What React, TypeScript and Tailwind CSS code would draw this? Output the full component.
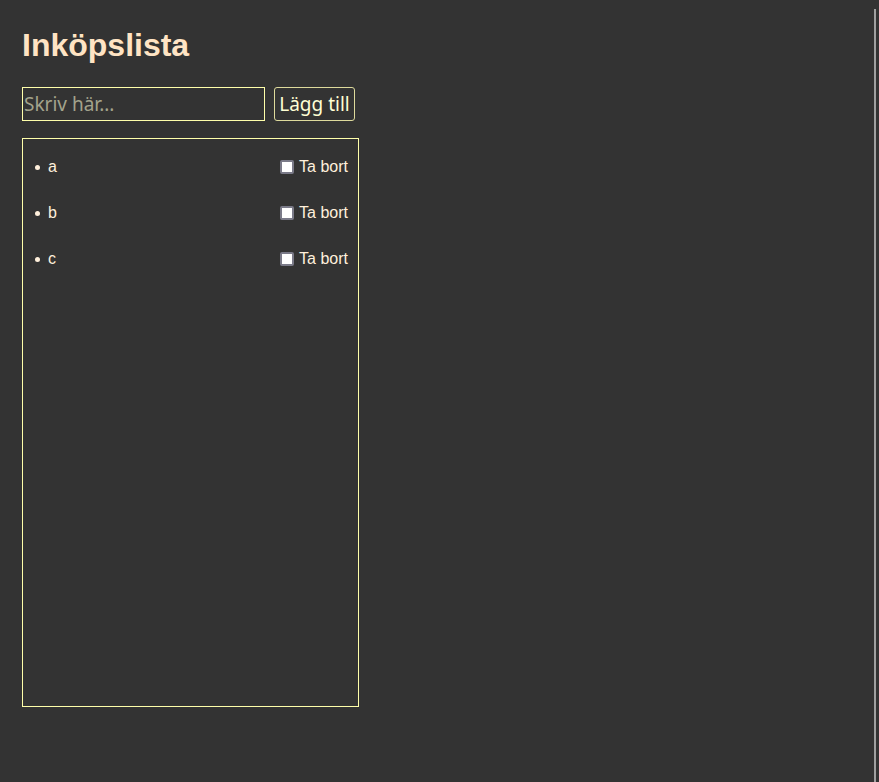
import React from "react";

const items = ["a", "b", "c"];

export default function App() {
  return (
    <div className="min-h-screen w-full bg-[#333333] flex" style={{ minHeight: 782 }}>
      <div className="flex-1 flex flex-col items-start pl-[22px] pt-[27px]">
        <h1 className="text-[32px] leading-[37px] font-bold text-[#ffe4c4] [font-family:'Liberation_Sans',Arial,sans-serif]">
          Inköpslista
        </h1>
        <div className="mt-[23px] flex items-center">
          <input
            type="text"
            placeholder="Skriv här..."
            className="w-[243px] h-[34px] border border-[#ffffaa] bg-transparent px-[1px] text-[19px] text-[#ffffd0] placeholder:text-[#a3a38c] outline-none [font-family:'Noto_Sans',sans-serif]"
          />
          <button className="ml-[9px] w-[81px] h-[34px] border border-[#deda9c] rounded-[3px] bg-transparent text-[19px] text-[#ffffd4] [font-family:'Noto_Sans',sans-serif] flex items-center justify-center">
            Lägg till
          </button>
        </div>
        <div className="mt-[17px] w-[337px] h-[569px] border border-[#ffffaa] pt-[5px] pl-[12px] pr-[10px] [font-family:'Liberation_Sans',Arial,sans-serif]">
          {items.map((it) => (
            <div key={it} className="h-[46px] flex items-center justify-between">
              <div className="flex items-center">
                <span className="w-[5px] h-[5px] rounded-full bg-[#fff0dc]" />
                <span className="ml-[8px] text-[16px] leading-[18px] text-[#fff0dc]">{it}</span>
              </div>
              <label className="flex items-center text-[16px] leading-[18px] text-[#fff0dc]">
                <input
                  type="checkbox"
                  className="appearance-none w-[14px] h-[14px] m-0 mr-[5px] bg-white border-2 border-[#7a7a88] rounded-[2px]"
                />
                Ta bort
              </label>
            </div>
          ))}
        </div>
      </div>
      <div className="w-[2px] bg-[#a0a0a0] mt-[9px] mr-[3px] self-stretch" />
    </div>
  );
}
